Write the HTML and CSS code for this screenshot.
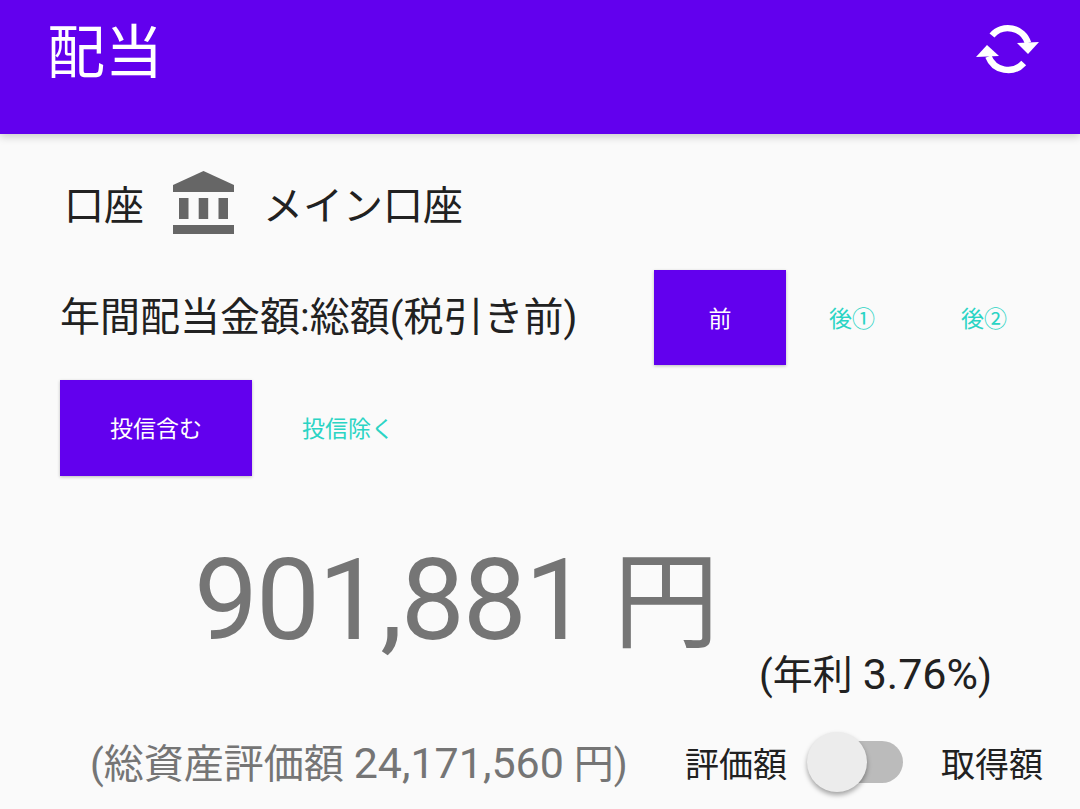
FILE: index.html
```html
<!DOCTYPE html>
<html lang="ja">
<head>
    <meta charset="UTF-8">
    <meta name="viewport" content="width=device-width, initial-scale=1.0">
    <title>配当</title>
    <link rel="stylesheet" href="styles.css">
</head>
<body>
    <header class="app-bar">
        <h1 class="app-title">配当</h1>
        <svg class="sync-icon" viewBox="0 0 66 50" width="66" height="50">
            <path class="sync-arc" d="M16 11.5A21 21 0 0 1 52 19"/>
            <path d="M41 19 63 18 52 30z"/>
            <path class="sync-arc" d="M47.7 39A21 21 0 0 1 12.4 32.5"/>
            <path d="M0 33 23 32 11 21z"/>
        </svg>
    </header>
    <main class="content">
        <div class="account-row">
            <span class="account-label">口座</span>
            <svg class="bank-icon" viewBox="0 0 61 63" width="61" height="63">
                <path d="M30.5 0 61 14v7H0v-7z"/>
                <rect x="6" y="27" width="9.5" height="21"/>
                <rect x="25.7" y="27" width="9.5" height="21"/>
                <rect x="45.5" y="27" width="9.5" height="21"/>
                <rect x="0" y="54" width="61" height="9"/>
            </svg>
            <span class="account-name">メイン口座</span>
        </div>
        <div class="tax-row">
            <span class="tax-label">年間配当金額:総額(税引き前)</span>
            <div class="tabs">
                <button class="tab tab-small active">前</button>
                <button class="tab tab-small">後①</button>
                <button class="tab tab-small">後②</button>
            </div>
        </div>
        <div class="tabs fund-tabs">
            <button class="tab tab-wide active">投信含む</button>
            <button class="tab tab-wide">投信除く</button>
        </div>
        <div class="amount"><span class="amount-num">901,881</span> 円</div>
        <div class="yield">(年利 <span class="num">3.76%</span>)</div>
        <div class="bottom-row">
            <span class="total">(総資産評価額 <span class="num">24,171,560</span> 円)</span>
            <span class="switch-label">評価額</span>
            <span class="switch"><span class="switch-thumb"></span></span>
            <span class="switch-label">取得額</span>
        </div>
    </main>
</body>
</html>
```

FILE: styles.css
```css
html, body {
    margin: 0;
    padding: 0;
    height: 100%;
    overflow: hidden;
}
body {
    background-color: #fafafa;
    font-family: Roboto, "Noto Sans CJK JP", sans-serif;
    color: #212121;
}
.app-bar {
    display: flex;
    justify-content: space-between;
    height: 134px;
    padding: 0 38px 0 47px;
    background-color: #6200ee;
    box-shadow: 0 3px 8px rgba(0, 0, 0, 0.18);
    position: relative;
}
.app-title {
    margin: 14px 0 0;
    font-size: 58px;
    font-weight: 400;
    line-height: 78px;
    color: white;
}
.sync-icon {
    margin-top: 24px;
    fill: white;
}
.sync-arc {
    fill: none;
    stroke: white;
    stroke-width: 6.5;
}
.content {
    padding: 37px 30px 0 60px;
}
.account-row {
    display: flex;
    align-items: center;
    height: 63px;
}
.account-label {
    margin-left: 4px;
    font-size: 40px;
}
.bank-icon {
    margin-left: 29px;
    fill: #666666;
}
.account-name {
    margin-left: 29px;
    font-size: 40px;
}
.tax-row {
    display: flex;
    justify-content: space-between;
    align-items: center;
    margin-top: 36px;
}
.tax-label {
    margin-bottom: 8px;
    font-size: 40px;
}
.tabs {
    display: flex;
}
.fund-tabs {
    margin-top: 15px;
}
.tab {
    border: none;
    padding: 0 0 2px;
    background: none;
    font-family: inherit;
    font-size: 23px;
    color: #2bd4c4;
}
.tab.active {
    background-color: #6200ee;
    color: white;
    box-shadow: 0 1px 3px rgba(0, 0, 0, 0.25);
}
.tab-small {
    width: 132px;
    height: 95px;
}
.tab-wide {
    width: 192px;
    height: 96px;
}
.amount {
    margin: 54px 0 0 134px;
    font-size: 106px;
    line-height: 140px;
    color: #757575;
    white-space: nowrap;
}
.amount-num {
    font-size: 114px;
    letter-spacing: -2px;
}
.num {
    font-size: 43px;
}
.yield {
    margin: -26px 0 0 699px;
    font-size: 40px;
    line-height: 54px;
    white-space: nowrap;
}
.bottom-row {
    display: flex;
    align-items: center;
    margin-top: 28px;
    height: 62px;
}
.total {
    margin: 0 0 2px 30px;
    width: 595px;
    font-size: 40px;
    color: #757575;
    white-space: nowrap;
}
.switch-label {
    font-size: 34px;
}
.switch {
    position: relative;
    width: 76px;
    height: 42px;
    margin: 0 38px 0 40px;
    border-radius: 21px;
    background-color: #bbbbbb;
}
.switch-thumb {
    position: absolute;
    left: -20px;
    top: -9px;
    width: 60px;
    height: 60px;
    border-radius: 50%;
    background-color: #ececec;
    box-shadow: 0 3px 5px rgba(0, 0, 0, 0.35);
}
```
